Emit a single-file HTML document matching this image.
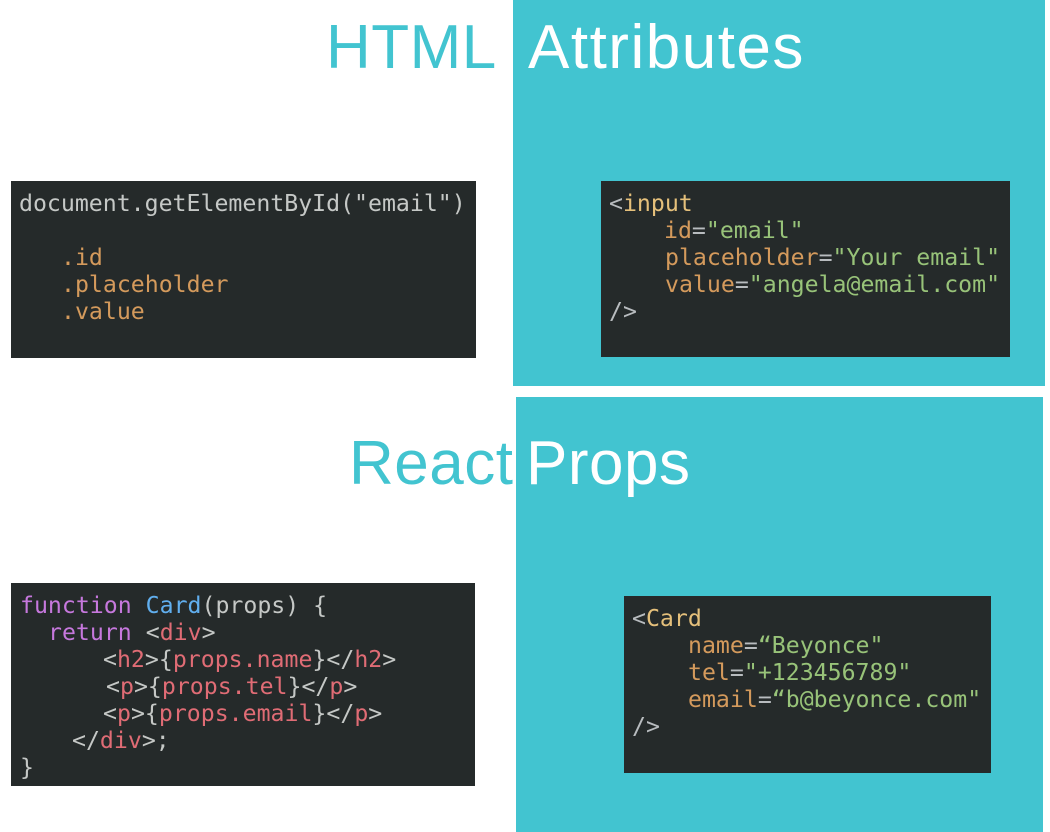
<!DOCTYPE html>
<html><head><meta charset="utf-8"><style>
body{margin:0;width:1050px;height:832px;background:#fff;position:relative;overflow:hidden;font-family:"Liberation Sans",sans-serif}
.teal{position:absolute;background:#42c4d0}
.t{position:absolute;font-size:62px;line-height:1;white-space:nowrap;letter-spacing:0.5px}
.box{position:absolute;background:#252a2a}
.l{position:absolute;font-family:"DejaVu Sans Mono","Liberation Mono",monospace;font-size:23.2px;line-height:27px;white-space:pre;color:#c5c8c6;margin-top:2px}
.o{color:#d49a5c}.g{color:#98c379}.y{color:#e5c07b}.p{color:#c678dd}.b{color:#61afef}.r{color:#e06c75}.w{color:#b8bcbf}
</style></head><body>
<div class="teal" style="left:513px;top:0;width:532px;height:386px"></div>
<div class="teal" style="left:516px;top:397px;width:527px;height:435px"></div>
<div class="t" style="left:326px;top:17px;color:#42c4d0">HTML</div>
<div class="t" style="left:528px;top:17px;color:#fff;letter-spacing:1.5px">Attributes</div>
<div class="t" style="left:349px;top:433px;color:#42c4d0">React</div>
<div class="t" style="left:526px;top:433px;color:#fff">Props</div>

<div class="box" style="left:11px;top:181px;width:465px;height:177px"></div>
<div class="l" style="left:19px;top:188px">document.getElementById("email")</div>
<div class="l o" style="left:61px;top:242px">.id</div>
<div class="l o" style="left:61px;top:269px">.placeholder</div>
<div class="l o" style="left:61px;top:296px">.value</div>

<div class="box" style="left:601px;top:181px;width:409px;height:176px"></div>
<div class="l" style="left:609px;top:188px"><span class="w">&lt;</span><span class="y">input</span></div>
<div class="l" style="left:664px;top:215px"><span class="o">id</span><span class="w">=</span><span class="g">"email"</span></div>
<div class="l" style="left:665px;top:242px"><span class="o">placeholder</span><span class="w">=</span><span class="g">"Your email"</span></div>
<div class="l" style="left:665px;top:269px"><span class="o">value</span><span class="w">=</span><span class="g">"angela@email.com"</span></div>
<div class="l w" style="left:609px;top:296px">/&gt;</div>

<div class="box" style="left:11px;top:583px;width:464px;height:203px"></div>
<div class="l" style="left:20px;top:590px"><span class="p">function</span> <span class="b">Card</span>(props) {</div>
<div class="l" style="left:48px;top:617px"><span class="p">return</span> &lt;<span class="r">div</span>&gt;</div>
<div class="l" style="left:103px;top:644px">&lt;<span class="r">h2</span>&gt;{<span class="r">props.name</span>}&lt;/<span class="r">h2</span>&gt;</div>
<div class="l" style="left:106px;top:671px">&lt;<span class="r">p</span>&gt;{<span class="r">props.tel</span>}&lt;/<span class="r">p</span>&gt;</div>
<div class="l" style="left:103px;top:698px">&lt;<span class="r">p</span>&gt;{<span class="r">props.email</span>}&lt;/<span class="r">p</span>&gt;</div>
<div class="l" style="left:72px;top:725px">&lt;/<span class="r">div</span>&gt;;</div>
<div class="l" style="left:20px;top:752px">}</div>

<div class="box" style="left:624px;top:596px;width:367px;height:177px"></div>
<div class="l" style="left:632px;top:603px"><span class="w">&lt;</span><span class="y">Card</span></div>
<div class="l" style="left:688px;top:630px"><span class="o">name</span><span class="w">=</span><span class="g">“Beyonce"</span></div>
<div class="l" style="left:688px;top:657px"><span class="o">tel</span><span class="w">=</span><span class="g">"+123456789"</span></div>
<div class="l" style="left:688px;top:684px"><span class="o">email</span><span class="w">=</span><span class="g">“b@beyonce.com"</span></div>
<div class="l w" style="left:632px;top:711px">/&gt;</div>
</body></html>
